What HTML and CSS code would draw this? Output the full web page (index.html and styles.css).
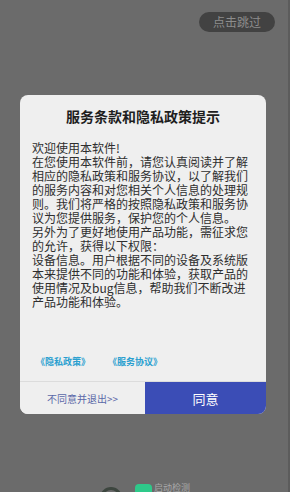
FILE: index.html
```html
<!DOCTYPE html>
<html lang="zh">
<head>
  <meta charset="UTF-8">
  <title>服务条款和隐私政策提示</title>
  <link rel="stylesheet" href="styles.css">
</head>
<body>
  <div class="screen">
    <div class="top-bar">
      <span class="skip">点击跳过</span>
    </div>

    <div class="dialog">
      <h2 class="dialog-title">服务条款和隐私政策提示</h2>
      <div class="dialog-text">
        <p>欢迎使用本软件!</p>
        <p>在您使用本软件前，请您认真阅读并了解相应的隐私政策和服务协议，以了解我们的服务内容和对您相关个人信息的处理规则。我们将严格的按照隐私政策和服务协议为您提供服务，保护您的个人信息。</p>
        <p>另外为了更好地使用产品功能，需征求您的允许，获得以下权限：</p>
        <p>设备信息。用户根据不同的设备及系统版本来提供不同的功能和体验，获取产品的使用情况及bug信息，帮助我们不断改进<br>产品功能和体验。</p>
      </div>
      <div class="links">
        <a href="#">《隐私政策》</a>
        <a href="#">《服务协议》</a>
      </div>
      <div class="actions">
        <button class="btn-exit">不同意并退出&gt;&gt;</button>
        <button class="btn-agree">同意</button>
      </div>
    </div>

    <div class="brand">
      <span class="brand-ring"></span>
      <span class="brand-mark"></span>
      <span class="brand-name">启动检测</span>
    </div>
  </div>
</body>
</html>
```

FILE: styles.css
```css
body {
  margin: 0;
  padding: 0;
  font-family: "Noto Sans CJK SC", "Noto Sans", sans-serif;
}

.screen {
  width: 290px;
  height: 492px;
  box-sizing: border-box;
  background-color: #6b6b6b;
  border-right: 2px solid #5c5c5c;
  display: flex;
  flex-direction: column;
  overflow: hidden;
}

.top-bar {
  display: flex;
  justify-content: flex-end;
  padding: 12px 13px 0 0;
}

.skip {
  display: inline-block;
  width: 76px;
  height: 20px;
  line-height: 20px;
  text-align: center;
  font-size: 12px;
  color: #8d8d8d;
  background-color: #424242;
  border-radius: 10px;
}

.dialog {
  flex-shrink: 0;
  margin: 63px 0 0 20px;
  width: 246px;
  background-color: #efefef;
  border-radius: 8px;
  overflow: hidden;
}

.dialog-title {
  margin: 0;
  padding-top: 11px;
  font-size: 14px;
  line-height: 20px;
  font-weight: bold;
  text-align: center;
  color: #1e1e1e;
}

.dialog-text {
  margin-top: 15px;
  padding: 0 8px 0 12px;
  font-size: 12px;
  line-height: 14px;
  color: #2e2e2e;
}

.dialog-text p {
  margin: 0;
}

.links {
  display: flex;
  gap: 18px;
  margin-top: 46px;
  padding: 0 0 12px 16px;
  font-size: 9px;
  line-height: 14px;
  font-weight: bold;
}

.links a {
  color: #2b9fcf;
  text-decoration: none;
}

.actions {
  display: flex;
  height: 32px;
  border-top: 1px solid #dcdcdc;
}

.actions button {
  border: none;
  padding: 0;
  font-family: inherit;
  cursor: pointer;
}

.btn-exit {
  width: 125px;
  background-color: #efefef;
  color: #5a68a8;
  font-size: 10px;
}

.btn-agree {
  flex: 1;
  background-color: #3b4db6;
  color: #ffffff;
  font-size: 13px;
}

.brand {
  flex-shrink: 0;
  display: flex;
  align-items: flex-start;
  margin: 68px 0 0 100px;
}

.brand-ring {
  width: 16px;
  height: 16px;
  margin-top: 5px;
  border: 3px solid #3d463f;
  border-radius: 50%;
}

.brand-mark {
  width: 17px;
  height: 14px;
  margin: 2px 0 0 13px;
  background-color: #2ec98a;
  border-radius: 4px;
}

.brand-name {
  margin-left: 2px;
  font-size: 9px;
  line-height: 12px;
  color: #a8a8a8;
}
```
